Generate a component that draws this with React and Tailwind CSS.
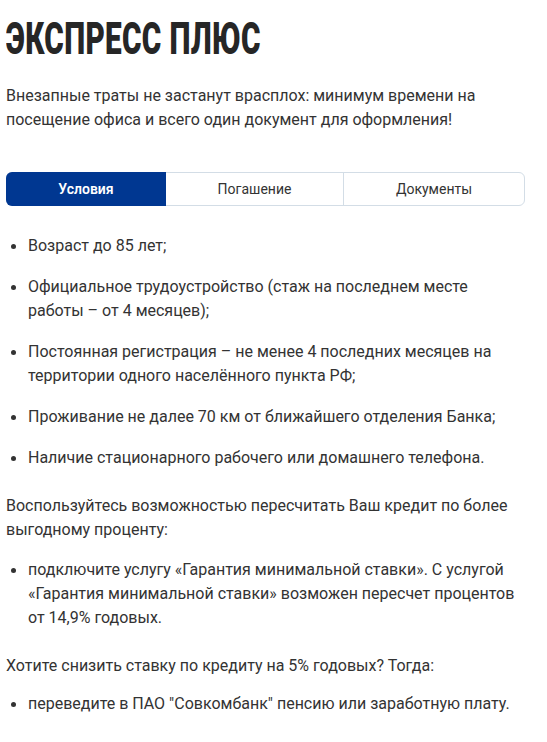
export default function App() {
  const items1 = [
    "Возраст до 85 лет;",
    "Официальное трудоустройство (стаж на последнем месте работы – от 4 месяцев);",
    "Постоянная регистрация – не менее 4 последних месяцев на территории одного населённого пункта РФ;",
    "Проживание не далее 70 км от ближайшего отделения Банка;",
    "Наличие стационарного рабочего или домашнего телефона.",
  ];
  const Bullet = ({ children }) => (
    <li className="flex items-start">
      <span className="w-[22px] shrink-0 flex h-6 items-center pl-[5px]">
        <span className="block w-[5px] h-[5px] rounded-full bg-[#333]" />
      </span>
      <span className="flex-1">{children}</span>
    </li>
  );
  return (
    <div className="bg-white min-h-[742px] w-[547px] px-[6px] pt-[15px] text-[#333] text-[16px] leading-6" style={{ fontFamily: "Roboto, 'Noto Sans', sans-serif" }}>
      <div className="w-[519px]">
        <h1 className="h-[48px] whitespace-nowrap overflow-visible">
          <span className="inline-block origin-left scale-x-[0.66] text-[45px] leading-[48px] font-black text-[#262626] tracking-[0.5px]" style={{ fontFamily: "Roboto, sans-serif" }}>ЭКСПРЕСС ПЛЮС</span>
        </h1>
        <p className="mt-[21px]">
          Внезапные траты не застанут врасплох: минимум времени на посещение офиса и всего один документ для оформления!
        </p>
        <div className="mt-[40px] flex h-[34px] text-[14px] rounded-[6px] border border-[#d3dde6]">
          <div className="w-[160px] -m-px mr-0 rounded-l-[6px] bg-[#003791] text-white font-semibold flex items-center justify-center">Условия</div>
          <div className="w-[178px] border-r border-[#d3dde6] flex items-center justify-center">Погашение</div>
          <div className="flex-1 flex items-center justify-center">Документы</div>
        </div>
        <ul className="mt-[28px] flex flex-col gap-[17px]">
          {items1.map((t) => (
            <Bullet key={t}>{t}</Bullet>
          ))}
        </ul>
        <p className="mt-[24px]">
          Воспользуйтесь возможностью пересчитать Ваш кредит по более выгодному проценту:
        </p>
        <ul className="mt-[16px]">
          <Bullet>
            подключите услугу «Гарантия минимальной ставки». С услугой «Гарантия минимальной ставки» возможен пересчет процентов от 14,9% годовых.
          </Bullet>
        </ul>
        <p className="mt-[24px]">Хотите снизить ставку по кредиту на 5% годовых? Тогда:</p>
        <ul className="mt-[14px]">
          <Bullet>переведите в ПАО "Совкомбанк" пенсию или заработную плату.</Bullet>
        </ul>
      </div>
    </div>
  );
}
